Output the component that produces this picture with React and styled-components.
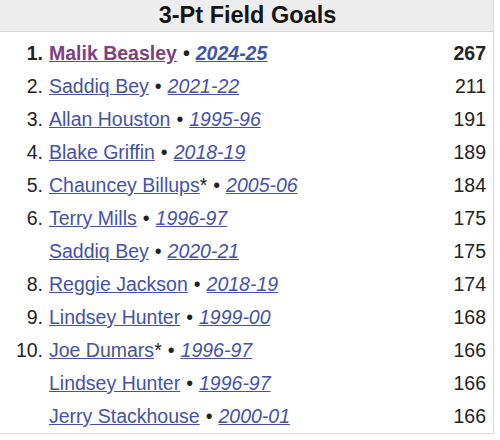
import React from "react";
import styled, { createGlobalStyle } from "styled-components";

const GlobalStyle = createGlobalStyle`
  html, body {
    margin: 0;
    padding: 0;
    background: #ffffff;
  }
  body {
    font-family: "Liberation Sans", Arial, sans-serif;
    color: #222;
  }
`;

const Panel = styled("div")`
  width: 493px;
  border-right: 1px solid #dcdcdc;
  border-bottom: 1px solid #dcdcdc;
  background: #fff;
`;

const Header = styled("div")`
  height: 32px;
  background: #ededed;
  border-bottom: 1px solid #d4d4d4;
  display: flex;
  align-items: center;
  justify-content: center;
  font-size: 23.5px;
  font-weight: bold;
  color: #151515;
  padding-left: 2px;
  box-sizing: border-box;
`;

const List = styled("div")`
  padding-top: 5px;
`;

const Row = styled("div")`
  height: 33px;
  display: flex;
  align-items: center;
  font-size: 19.5px;
  font-weight: ${(p) => (p.$lead ? "bold" : "normal")};
`;

const Rank = styled("span")`
  width: 43px;
  text-align: right;
  margin-right: 6px;
  color: #222;
  flex-shrink: 0;
`;

const Entry = styled("span")`
  flex: 1;
  white-space: nowrap;
  color: #222;
`;

const Name = styled("a")`
  color: ${(p) => (p.$visited ? "#7d4080" : "#4452a8")};
  text-decoration: underline;
  cursor: pointer;
`;

const Year = styled(Name)`
  font-style: italic;
  color: #4452a8;
`;

const Sep = styled("span")`
  margin: 0 6px;
`;

const Value = styled("span")`
  width: 60px;
  text-align: right;
  padding-right: 7px;
  color: #222;
`;

const rows = [
  { rank: "1.", name: "Malik Beasley", year: "2024-25", value: 267, lead: true },
  { rank: "2.", name: "Saddiq Bey", year: "2021-22", value: 211 },
  { rank: "3.", name: "Allan Houston", year: "1995-96", value: 191 },
  { rank: "4.", name: "Blake Griffin", year: "2018-19", value: 189 },
  { rank: "5.", name: "Chauncey Billups", hof: true, year: "2005-06", value: 184 },
  { rank: "6.", name: "Terry Mills", year: "1996-97", value: 175 },
  { rank: "", name: "Saddiq Bey", year: "2020-21", value: 175 },
  { rank: "8.", name: "Reggie Jackson", year: "2018-19", value: 174 },
  { rank: "9.", name: "Lindsey Hunter", year: "1999-00", value: 168 },
  { rank: "10.", name: "Joe Dumars", hof: true, year: "1996-97", value: 166 },
  { rank: "", name: "Lindsey Hunter", year: "1996-97", value: 166 },
  { rank: "", name: "Jerry Stackhouse", year: "2000-01", value: 166 },
];

const App = () => (
  <>
    <GlobalStyle />
    <Panel>
      <Header>3-Pt Field Goals</Header>
      <List>
        {rows.map((r, i) => (
          <Row key={i} $lead={r.lead}>
            <Rank>{r.rank}</Rank>
            <Entry>
              <Name $visited={r.lead}>{r.name}</Name>
              {r.hof && "*"}
              <Sep>•</Sep>
              <Year>{r.year}</Year>
            </Entry>
            <Value>{r.value}</Value>
          </Row>
        ))}
      </List>
    </Panel>
  </>
);

export default App;
